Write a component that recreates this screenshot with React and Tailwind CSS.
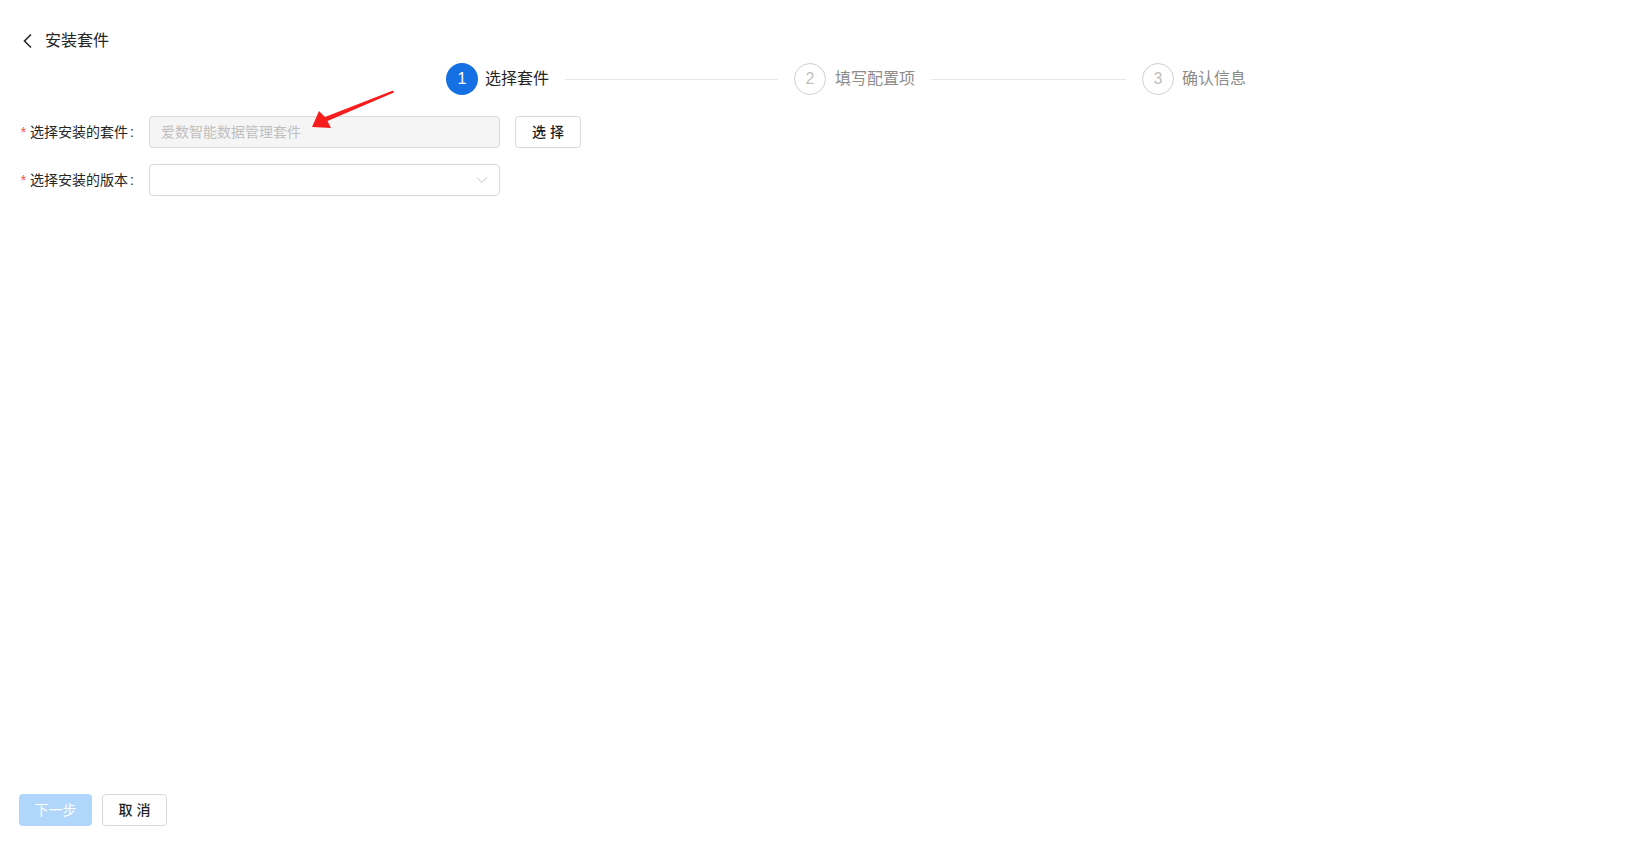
import React from "react";

const FONT = { fontFamily: '"Liberation Sans", "Noto Sans CJK SC", sans-serif' };

function StepCircle({ n, active }) {
  return active ? (
    <div className="w-[32px] h-[32px] rounded-full bg-[#1570e3] text-white flex items-center justify-center text-[16px] shrink-0">
      {n}
    </div>
  ) : (
    <div className="w-[32px] h-[32px] rounded-full border border-[#d0d0d0] text-[#bfbfbf] flex items-center justify-center text-[16px] shrink-0">
      {n}
    </div>
  );
}

function FormRow({ label, children }) {
  return (
    <div className="flex items-center h-[32px]">
      <div className="w-[149px] flex items-center justify-end pr-[15px] text-[14px] text-[#262626]">
        <span className="text-[#ff4d4f] mr-[4px] text-[14px]">*</span>
        <span>{label}</span>
        <span className="ml-[2px]">:</span>
      </div>
      {children}
    </div>
  );
}

export default function App() {
  return (
    <div className="relative h-screen w-full bg-white flex flex-col" style={FONT}>
      {/* title */}
      <div className="mt-[29px] h-[24px] flex items-center pl-[20px]">
        <svg width="14" height="16" viewBox="0 0 14 16" className="ml-[1px]">
          <path d="M10 1.5 L3.5 8 L10 14.5" fill="none" stroke="#262626" strokeWidth="1.6" />
        </svg>
        <span className="ml-[10px] text-[16px] text-[#262626]">安装套件</span>
      </div>

      {/* steps */}
      <div className="mt-[10px] ml-[446px] w-[800px] h-[32px] flex items-center">
        <div className="flex-1 flex items-center">
          <StepCircle n={1} active />
          <span className="ml-[7px] text-[16px] text-[#262626] shrink-0">选择套件</span>
          <div className="flex-1 mx-[16px] h-px bg-[#e8e8e8]" />
        </div>
        <div className="flex-1 flex items-center">
          <StepCircle n={2} />
          <span className="ml-[9px] text-[16px] text-[#8c8c8c] shrink-0">填写配置项</span>
          <div className="flex-1 mx-[16px] h-px bg-[#e8e8e8]" />
        </div>
        <div className="shrink-0 flex items-center">
          <StepCircle n={3} />
          <span className="ml-[8px] text-[16px] text-[#8c8c8c] shrink-0">确认信息</span>
        </div>
      </div>

      {/* form */}
      <div className="mt-[21px] flex flex-col gap-[16px]">
        <FormRow label="选择安装的套件">
          <div className="w-[351px] h-[32px] rounded-[4px] border border-[#d9d9d9] bg-[#f5f5f5] flex items-center px-[11px] text-[14px] text-[#bfbfbf]">
            爱数智能数据管理套件
          </div>
          <button className="ml-[15px] w-[66px] h-[32px] rounded-[4px] border border-[#d9d9d9] bg-white text-[14px] text-[#1f1f1f] font-medium flex items-center justify-center">
            选 择
          </button>
        </FormRow>
        <FormRow label="选择安装的版本">
          <div className="w-[351px] h-[32px] rounded-[4px] border border-[#d9d9d9] bg-white flex items-center justify-end pr-[11px]">
            <svg width="12" height="8" viewBox="0 0 12 8">
              <path d="M1 1.5 L6 6.5 L11 1.5" fill="none" stroke="#bfbfbf" strokeWidth="1" />
            </svg>
          </div>
        </FormRow>
      </div>

      {/* footer */}
      <div className="mt-auto mb-[17px] ml-[19px] flex items-center gap-[10px]">
        <button className="w-[73px] h-[32px] rounded-[4px] bg-[#b1d6fb] text-white text-[14px] flex items-center justify-center">
          下一步
        </button>
        <button className="w-[65px] h-[32px] rounded-[4px] border border-[#d9d9d9] bg-white text-[14px] text-[#1f1f1f] font-medium flex items-center justify-center">
          取 消
        </button>
      </div>

      {/* red annotation arrow */}
      <svg
        className="absolute left-[300px] top-[85px] pointer-events-none"
        width="100"
        height="50"
        viewBox="300 85 100 50"
      >
        <polygon
          points="312,127 319,111 325,117 393,90.5 394,92.5 327.5,121 331,128"
          fill="#f81d1d"
        />
      </svg>
    </div>
  );
}
